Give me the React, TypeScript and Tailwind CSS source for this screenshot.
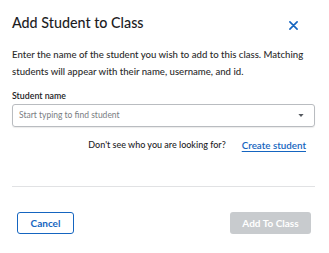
export default function App() {
  return (
    <div className="h-[253px] w-[329px] overflow-hidden bg-white font-['Lato','Noto_Sans',sans-serif] text-[#1d1d1f]">
      <div className="flex items-center justify-between pl-3 pr-[31px] pt-[13px]">
        <h1 className="text-[14.3px] font-medium leading-[20px]">Add Student to Class</h1>
        <button type="button" aria-label="Close" className="mt-[4px] text-[#1565c0]">
          <svg width="9" height="9" viewBox="0 0 10 10" fill="none" stroke="currentColor" strokeWidth="1.8" strokeLinecap="round">
            <path d="M1 1l8 8M9 1l-8 8" />
          </svg>
        </button>
      </div>

      <p className="mt-[13px] pl-3 pr-[20px] text-[9.6px] font-medium leading-[17px] text-[#2b2b2b]">
        Enter the name of the student you wish to add to this class. Matching students will appear with their name, username, and id.
      </p>

      <div className="mt-[9px] px-3">
        <label className="block text-[8.8px] font-semibold leading-[14px]">Student name</label>
        <div className="mt-px flex h-[23px] w-[303px] items-center justify-between rounded-[3px] border border-[#b9bcc0] pl-[6px] pr-[10px] shadow-[0_1px_1px_rgba(0,0,0,0.08)]">
          <span className="text-[8.5px] text-[#7a7d82]">Start typing to find student</span>
          <svg width="6" height="3" viewBox="0 0 7 4" fill="#555a60"><path d="M0 0h7L3.5 4z" /></svg>
        </div>
        <div className="mt-[11px] flex h-[14px] items-center justify-end gap-[16px] pr-[11px]">
          <span className="text-[9px] font-medium">Don't see who you are looking for?</span>
          <a className="text-[9.8px] font-semibold text-[#1565c0] underline underline-offset-2">Create student</a>
        </div>
      </div>

      <div className="mx-3 mt-[34px] h-px w-[303px] bg-[#e1e2e4]" />

      <div className="mt-[25px] flex items-center justify-between pl-[17px] pr-[18px]">
        <button type="button" className="h-[22px] w-[57px] rounded-[3px] border border-[#1565c0] text-[10px] font-bold text-[#1565c0]">
          Cancel
        </button>
        <button type="button" className="h-[22px] w-[81px] rounded-[3px] bg-[#c8cbce] text-[10px] font-bold text-white">
          Add To Class
        </button>
      </div>
    </div>
  )
}
